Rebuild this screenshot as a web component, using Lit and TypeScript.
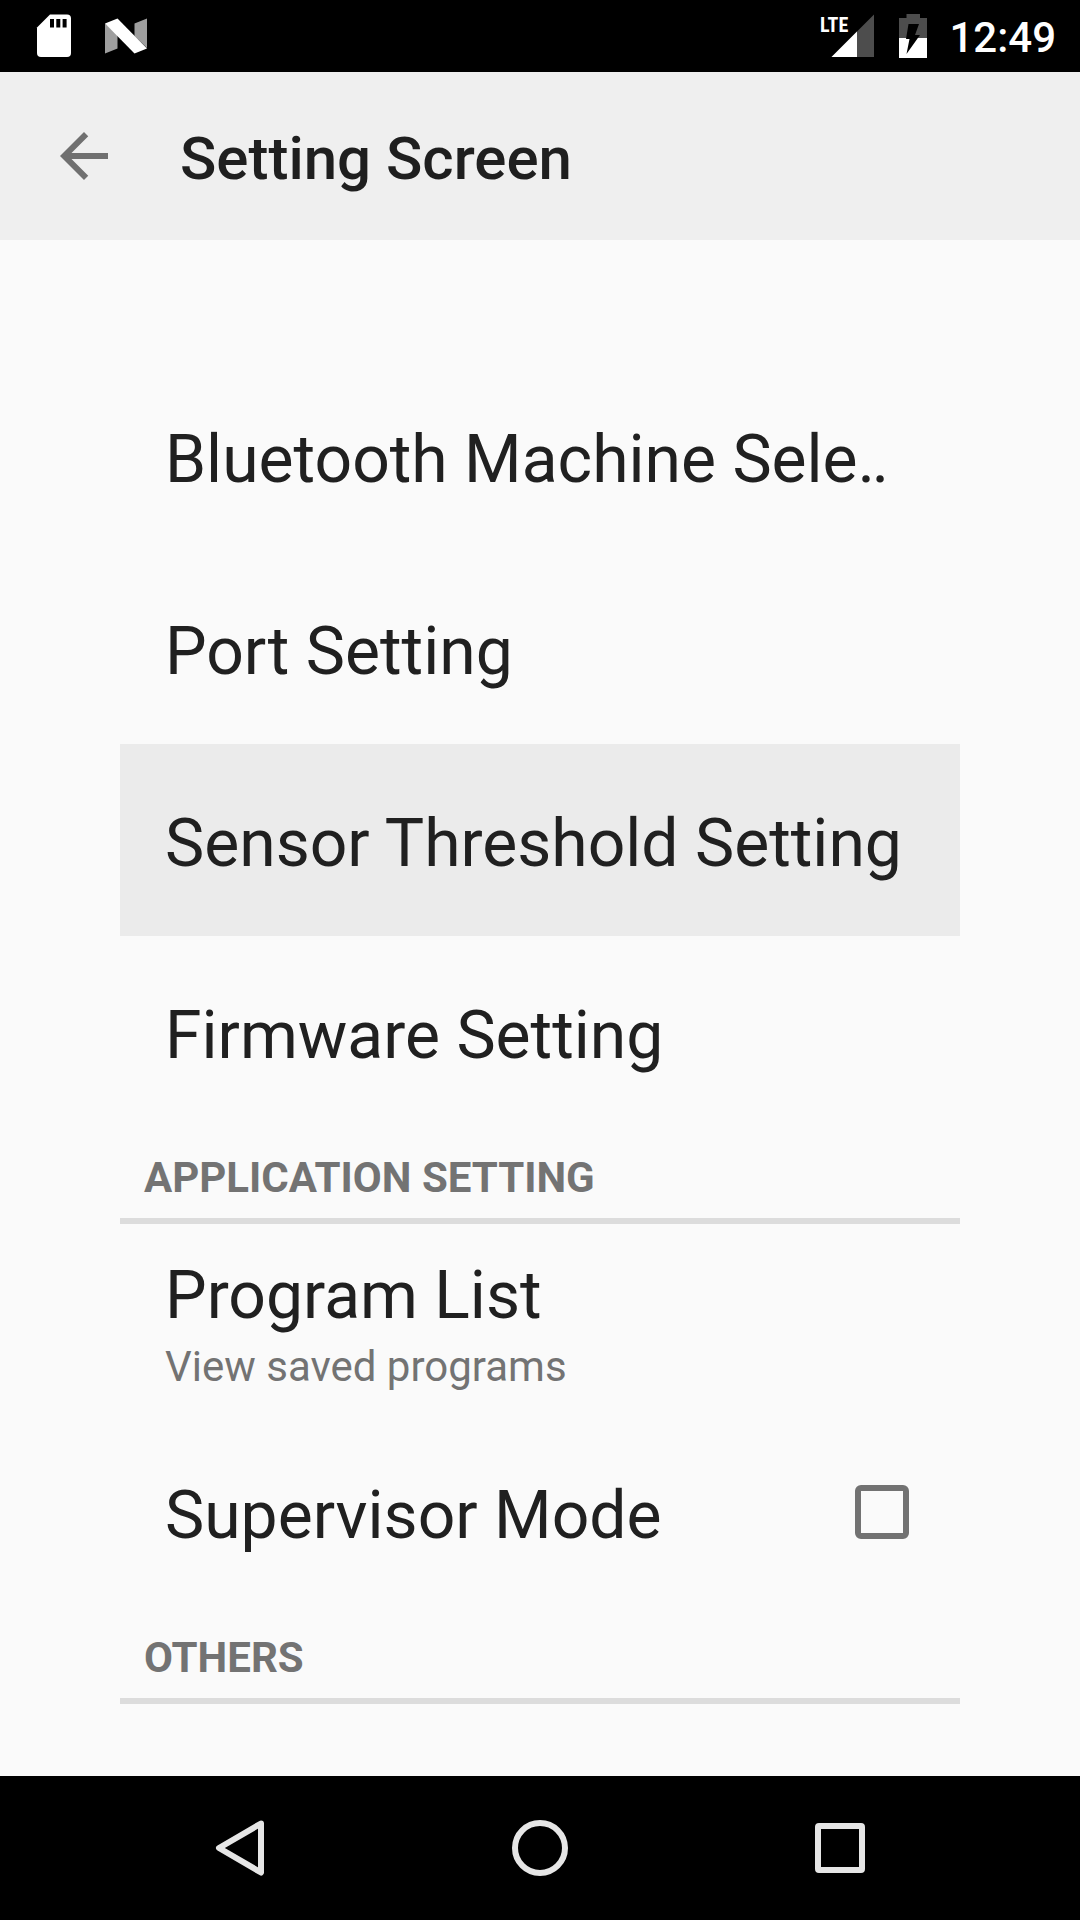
import { LitElement, html, css, svg, nothing } from "lit";
import { customElement, property, state } from "lit/decorators.js";
import { classMap } from "lit/directives/class-map.js";

const FONT = css`Roboto, "Noto Sans", sans-serif`;

@customElement("status-bar")
class StatusBar extends LitElement {
  static styles = css`
    :host {
      display: flex;
      align-items: center;
      justify-content: space-between;
      height: 72px;
      padding: 0 24px;
      background: #000;
      color: #fff;
      font-family: ${FONT};
    }
    .group {
      display: flex;
      align-items: center;
    }
    .notifications {
      gap: 12px;
    }
    .icon {
      display: block;
      height: 72px;
    }
    .battery {
      margin: 0 15px 0 18px;
    }
    .lte {
      font: bold 20px "Roboto Condensed", "Open Sans Condensed", "Liberation Sans Narrow", sans-serif;
    }
    .clock {
      padding-top: 4px;
      font-size: 42px;
      line-height: 48px;
      font-weight: 500;
    }
  `;

  render() {
    return html`
      <div class="group notifications">
        <svg class="icon" width="60" height="72" viewBox="0 0 60 72" role="img" aria-label="SD card">
          <path fill="#fff" d="M26 14.500H43Q47 14.500 47 18.500V53Q47 57 43 57H17Q13 57 13 53V27.500Z" />
          <path fill="#000" d="M26 19h4v8.500h-4zM32.300 19h4v8.500h-4zM38.600 19h4v8.500h-4z" />
        </svg>
        <svg class="icon" width="60" height="72" viewBox="0 0 60 72" role="img" aria-label="Android N">
          <path fill="#9e9e9e" d="M9 23.500 21.500 34V48.500L9 53.500ZM38.500 23.500 51 18.500V48L38.500 36Z" />
          <path fill="#fff" d="M9 23.500 21.500 18.500 51 48.500 38.500 53.500Z" />
        </svg>
      </div>
      <div class="group">
        <svg class="icon" width="54" height="72" viewBox="0 0 54 72" role="img" aria-label="LTE signal">
          <path fill="#4d4d4d" d="M54 14.500V57H11.500Z" />
          <path fill="#fff" d="M37 31.500V57H11.500Z" />
          <text class="lte" x="0" y="32" fill="#fff">LTE</text>
        </svg>
        <svg class="icon battery" width="42" height="72" viewBox="0 0 42 72" role="img" aria-label="Battery charging">
          <path fill="#4d4d4d" d="M14.500 14H28V18H35V38H7V18H14.500Z" />
          <path fill="#fff" d="M7 38H35V58H7Z" />
          <path fill="#000" d="M16.500 24H27L23 35H28L14.500 54 17.500 39H14Z" />
        </svg>
        <span class="clock">12:49</span>
      </div>
    `;
  }
}

@customElement("app-toolbar")
class AppToolbar extends LitElement {
  static styles = css`
    :host {
      display: flex;
      align-items: center;
      gap: 12px;
      height: 168px;
      background: #efefef;
      font-family: ${FONT};
    }
    .back {
      display: flex;
      align-items: center;
      justify-content: center;
      width: 168px;
      height: 168px;
      padding: 0;
      border: 0;
      background: none;
    }
    .title {
      margin: 0;
      padding-top: 6px;
      font-size: 60px;
      line-height: 72px;
      font-weight: 500;
      color: #1f1f1f;
    }
  `;
  @property() heading = "";

  render() {
    return html`
      <button class="back" aria-label="Navigate up">
        <svg width="72" height="72" viewBox="0 0 24 24" aria-hidden="true">
          <path fill="#707070" d="M20 11H7.830l5.590-5.590L12 4l-8 8 8 8 1.410-1.410L7.830 13H20v-2z" />
        </svg>
      </button>
      <h1 class="title">${this.heading}</h1>
    `;
  }
}

interface Item {
  title: string;
  summary?: string;
  toggle?: boolean;
}

interface Section {
  heading?: string;
  items: Item[];
}

const SECTIONS: Section[] = [
  {
    items: [
      { title: "Bluetooth Machine Sele\u2025" },
      { title: "Port Setting" },
      { title: "Sensor Threshold Setting" },
      { title: "Firmware Setting" },
    ],
  },
  {
    heading: "Application Setting",
    items: [
      { title: "Program List", summary: "View saved programs" },
      { title: "Supervisor Mode", toggle: true },
    ],
  },
  { heading: "Others", items: [] },
];

@customElement("settings-list")
class SettingsList extends LitElement {
  static styles = css`
    :host {
      display: block;
      padding: 120px 120px 72px;
      font-family: ${FONT};
      color: #202020;
    }
    .heading {
      margin: 0;
      padding: 26px 24px 16px;
      border-bottom: 6px solid #dcdcdc;
      font-size: 42px;
      line-height: 48px;
      font-weight: 700;
      text-transform: uppercase;
      color: #737373;
    }
    .row {
      display: flex;
      align-items: center;
      box-sizing: border-box;
      width: 100%;
      min-height: 192px;
      margin: 0;
      padding: 0 51px 0 45px;
      border: 0;
      background: none;
      color: inherit;
      font: inherit;
      text-align: left;
    }
    .active {
      background: #ebebeb;
    }
    .text {
      display: flex;
      flex: 1;
      flex-direction: column;
      gap: 8px;
      padding-top: 8px;
    }
    .title {
      font-size: 66px;
      line-height: 78px;
      white-space: nowrap;
    }
    .summary {
      font-size: 42px;
      line-height: 48px;
      color: #737373;
    }
    .check {
      appearance: none;
      box-sizing: border-box;
      width: 54px;
      height: 54px;
      margin: 0;
      border: 6px solid #727272;
      border-radius: 6px;
    }
    .check:checked {
      background: #727272;
    }
  `;
  @state() selected = "Sensor Threshold Setting";

  private text(item: Item) {
    return html`
      <span class="text">
        <span class="title">${item.title}</span>
        ${item.summary ? html`<span class="summary">${item.summary}</span>` : nothing}
      </span>
    `;
  }

  private row(item: Item) {
    if (item.toggle) {
      return html`<label class="row">${this.text(item)}<input class="check" type="checkbox" /></label>`;
    }
    return html`
      <button
        class=${classMap({ row: true, active: item.title === this.selected })}
        @click=${() => (this.selected = item.title)}
      >
        ${this.text(item)}
      </button>
    `;
  }

  render() {
    return SECTIONS.map(
      (section) => html`
        <section>
          ${section.heading ? html`<h2 class="heading">${section.heading}</h2>` : nothing}
          ${section.items.map((item) => this.row(item))}
        </section>
      `
    );
  }
}

const NAV = [
  { label: "Back", shape: svg`<path d="M69 23.500 27 48 69 72.500Z" />` },
  { label: "Home", shape: svg`<circle cx="48" cy="48" r="25" />` },
  { label: "Overview", shape: svg`<rect x="26" y="26" width="44" height="44" rx="1" />` },
];

@customElement("nav-bar")
class NavBar extends LitElement {
  static styles = css`
    :host {
      display: flex;
      height: 144px;
      padding: 0 90px;
      background: #000;
    }
    .key {
      display: flex;
      flex: 1;
      align-items: center;
      justify-content: center;
      padding: 0;
      border: 0;
      background: none;
    }
    .glyph {
      fill: none;
      stroke: #e6e6e6;
      stroke-width: 6;
      stroke-linejoin: round;
    }
  `;

  render() {
    return NAV.map(
      (key) => html`
        <button class="key" aria-label=${key.label}>
          <svg class="glyph" width="96" height="96" viewBox="0 0 96 96" aria-hidden="true">${key.shape}</svg>
        </button>
      `
    );
  }
}

@customElement("app-root")
class AppRoot extends LitElement {
  static styles = css`
    :host {
      display: flex;
      flex-direction: column;
      min-height: 100vh;
      background: #fafafa;
    }
    .content {
      flex: 1;
    }
  `;

  render() {
    return html`
      <status-bar></status-bar>
      <app-toolbar heading="Setting Screen"></app-toolbar>
      <main class="content"><settings-list></settings-list></main>
      <nav-bar></nav-bar>
    `;
  }
}
